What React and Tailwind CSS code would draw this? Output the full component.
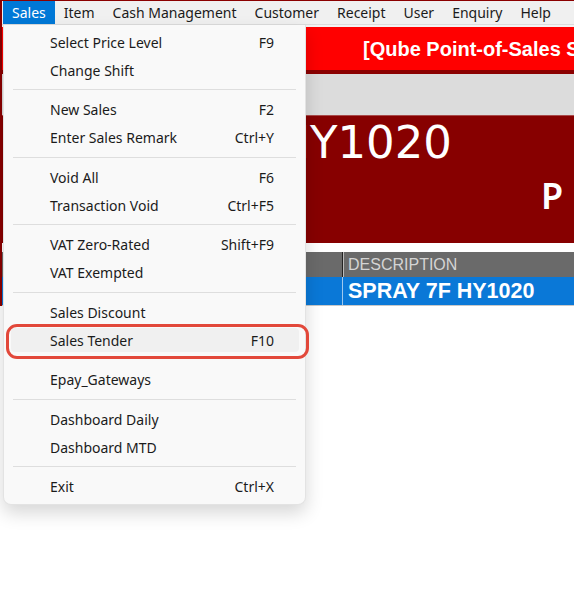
import React from "react";

const menuBar = ["Sales", "Item", "Cash Management", "Customer", "Receipt", "User", "Enquiry", "Help"];

// groups of the Sales dropdown, a separator goes between groups
const groups = [
    [["Select Price Level", "F9"], ["Change Shift", ""]],
    [["New Sales", "F2"], ["Enter Sales Remark", "Ctrl+Y"]],
    [["Void All", "F6"], ["Transaction Void", "Ctrl+F5"]],
    [["VAT Zero-Rated", "Shift+F9"], ["VAT Exempted", ""]],
    [["Sales Discount", ""], ["Sales Tender", "F10"]],
    [["Epay_Gateways", ""]],
    [["Dashboard Daily", ""], ["Dashboard MTD", ""]],
    [["Exit", "Ctrl+X"]],
];

const MenuItem = ({ label, shortcut, active }) => (
    <div className="relative h-[28px]">
        {active && (
            <>
                <div className="absolute inset-y-[2px] left-[7px] right-[6px] rounded bg-[#f0f0f0]" />
                <div className="absolute top-[-2px] bottom-[-5px] left-[2px] right-[-4px] rounded-[11px] border-[3px] border-[#e2483a]" />
            </>
        )}
        <div className="relative flex h-full items-center justify-between pl-[46px] pr-[31px] text-[14px] text-[#1b1b1b]">
            <span>{label}</span>
            <span>{shortcut}</span>
        </div>
    </div>
);

const SalesMenu = () => (
    <div className="absolute left-[3px] top-[25px] w-[303px] rounded-b-lg border border-t-0 border-[#e3e3e3] bg-[#f9f9f9] pt-[3px] pb-[3px] shadow-[0_8px_18px_rgba(0,0,0,0.16)]">
        {groups.map((g, gi) => (
            <div key={gi}>
                {gi > 0 && (
                    <div className="flex h-[11.5px] items-center px-[9px]">
                        {gi !== 5 && <div className="h-px w-full bg-[#dedede]" />}
                    </div>
                )}
                {g.map(([label, shortcut]) => (
                    <MenuItem
                        key={label}
                        label={label}
                        shortcut={shortcut}
                        active={label === "Sales Tender"}
                    />
                ))}
            </div>
        ))}
    </div>
);

export default function App() {
    return (
        <div className="relative h-[613px] w-[574px] overflow-hidden bg-white font-['Noto_Sans',sans-serif]">
            <div className="border-l-2 border-t border-[#8b0000]">
                {/* menu bar */}
                <div className="flex h-[24px] items-center border-b border-[#dcdcdc] bg-[#f0f0f0] text-[14px] text-[#1b1b1b]">
                    {menuBar.map((m, i) => (
                        <span
                            key={m}
                            className={
                                i === 0
                                    ? "ml-px flex h-full items-center bg-[#0078d7] px-[9px] text-white"
                                    : "flex h-full items-center px-[9px]"
                            }
                        >
                            {m}
                        </span>
                    ))}
                </div>

                <div className="h-[2px] bg-[#f3f3f3]" />

                {/* title bar */}
                <div className="flex h-[43px] items-center bg-[#ff0000] pl-[361px] font-['Liberation_Sans',sans-serif] text-[20px] font-bold whitespace-nowrap text-white">
                    [Qube Point-of-Sales System]
                </div>
                <div className="h-[4px] bg-[#8b0000]" />
                <div className="h-[41px] bg-[#dcdcdc]" />

                {/* item display */}
                <div className="relative h-[128px] border-t border-[#a84a4a] bg-[#870000] text-white">
                    <div className="w-[450px] text-right font-['DejaVu_Sans',sans-serif] text-[45px] leading-[54px] whitespace-nowrap">
                        HY1020
                    </div>
                    <div className="pl-[539px] pt-[6px] text-[36px] leading-[40px] font-semibold">P</div>
                </div>
                <div className="h-[9px] bg-white" />

                {/* grid */}
                <div className="flex h-[25px] bg-[#6a6a6a] font-['Liberation_Sans',sans-serif]">
                    <div className="w-[341px] border-r border-[#222]" />
                    <div className="flex items-center border-l border-[#bbb] pl-[4px] text-[16px] text-[#d4d4d4]">
                        DESCRIPTION
                    </div>
                </div>
                <div className="flex h-[29px] border-b border-[#c8c8c8] bg-[#0a78d7] font-['Liberation_Sans',sans-serif]">
                    <div className="w-[341px] border-r border-[#9ec8ee]" />
                    <div className="flex items-center pl-[5px] text-[21.5px] font-bold whitespace-nowrap text-white">
                        SPRAY 7F HY1020
                    </div>
                </div>
            </div>

            <SalesMenu />
        </div>
    );
}
